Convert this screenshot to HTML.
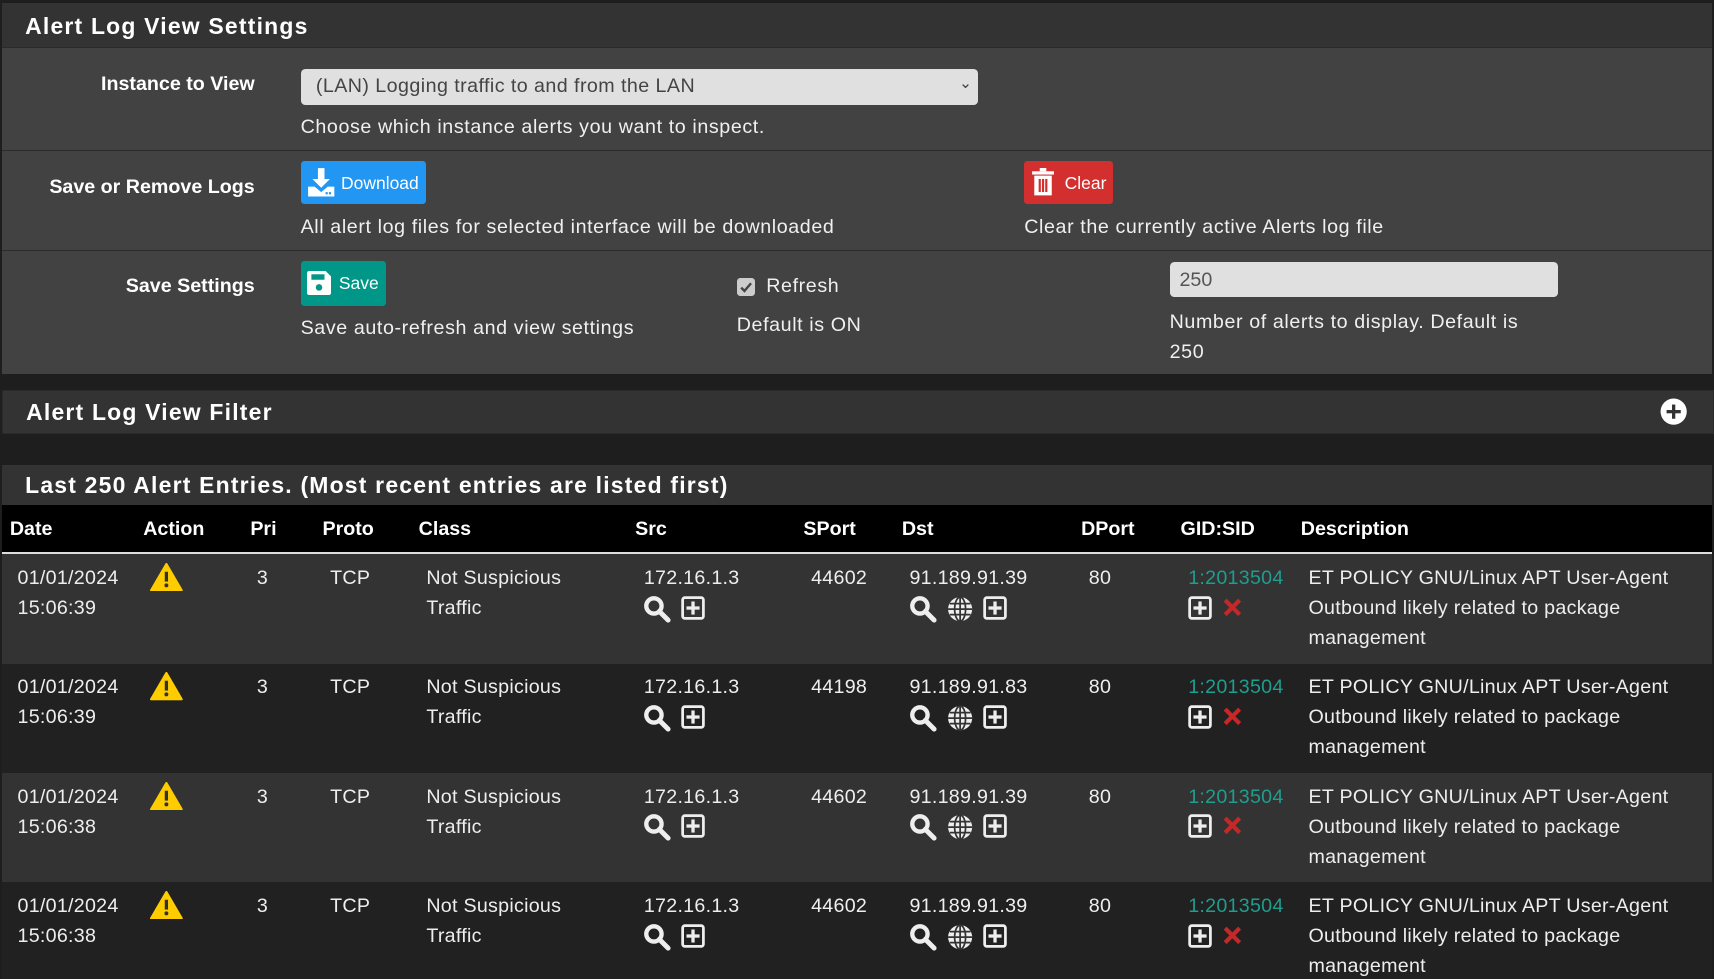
<!DOCTYPE html>
<html><head><meta charset="utf-8"><style>
html,body{margin:0;padding:0;background:#1e1e1e;width:1714px;height:979px;overflow:hidden}
#w{zoom:1.09311;width:1568px;height:896px;position:relative;font-family:"Liberation Sans",sans-serif;color:#fff}
.a{position:absolute;white-space:nowrap}
.pan{position:absolute;left:2px;width:1564px}
.hd{background:#333;border-bottom:1px solid #2a2a2a}
.ttl{position:absolute;left:21px;font-size:21px;font-weight:bold;letter-spacing:1.1px;color:#fff}
.lbl{position:absolute;font-size:18px;font-weight:bold;right:1335px;text-align:right}
.t{font-size:18px;color:#f0f0f0;letter-spacing:0.55px}
.btn{position:absolute;border-radius:3px;color:#fff;font-size:16px}
.th{position:absolute;top:474px;font-size:18px;font-weight:bold}
.row{position:absolute;left:2px;width:1564px;height:100px}
.c{position:absolute;font-size:18px;line-height:27.5px;color:#eee;letter-spacing:0.25px}
</style></head><body><div id="w">
<div class="pan hd" style="top:3px;height:40px"><div class="ttl" style="top:9px">Alert Log View Settings</div></div>
<div class="pan" style="top:44px;height:93px;background:#424242;border-bottom:1px solid #2b2b2b"></div>
<div class="pan" style="top:138px;height:91px;background:#424242;border-bottom:1px solid #2b2b2b"></div>
<div class="pan" style="top:230px;height:112px;background:#424242"></div>
<div class="a lbl" style="top:67px">Instance to View</div>
<div class="a" style="left:275px;top:63px;width:620px;height:33px;background:#e0e0e0;border-radius:4px"><span class="a" style="left:14px;top:6px;font-size:18px;color:#444;letter-spacing:0.4px">(LAN) Logging traffic to and from the LAN</span><span class="a" style="right:6px;top:5px;font-size:14px;color:#444">&#8964;</span></div>
<div class="a t" style="left:275px;top:106px">Choose which instance alerts you want to inspect.</div>
<div class="a lbl" style="top:161px">Save or Remove Logs</div>
<div class="btn" style="left:275px;top:147px;width:115px;height:40px;background:#2196f3">
<svg class="a" style="left:6px;top:6px" width="26" height="28" viewBox="0 0 26 28"><path d="M10 1h6v10h5l-8 8-8-8h5z" fill="#fff"/><path d="M1 18h6l6 5 6-5h6v9H1z" fill="#fff"/><rect x="17" y="23" width="2" height="2" fill="#2196f3"/><rect x="20" y="23" width="2" height="2" fill="#2196f3"/></svg>
<span class="a" style="left:37px;top:11px">Download</span></div>
<div class="a t" style="left:275px;top:198px">All alert log files for selected interface will be downloaded</div>
<div class="btn" style="left:937px;top:147px;width:81px;height:40px;background:#d32f2f">
<svg class="a" style="left:6px;top:7px" width="22" height="26" viewBox="0 0 22 26"><rect x="1" y="3" width="20" height="3" fill="#fff"/><rect x="8" y="0" width="6" height="3" fill="#fff"/><path d="M3 7h16v18H3z" fill="#fff"/><rect x="7" y="10" width="2" height="12" fill="#d32f2f"/><rect x="10" y="10" width="2" height="12" fill="#d32f2f"/><rect x="13" y="10" width="2" height="12" fill="#d32f2f"/></svg>
<span class="a" style="left:37px;top:11px">Clear</span></div>
<div class="a t" style="left:937px;top:198px">Clear the currently active Alerts log file</div>
<div class="a lbl" style="top:252px">Save Settings</div>
<div class="btn" style="left:275px;top:239px;width:78px;height:41px;background:#009688">
<svg class="a" style="left:6px;top:9px" width="22" height="22" viewBox="0 0 22 22"><path d="M0 2a2 2 0 012-2h15l5 5v15a2 2 0 01-2 2H2a2 2 0 01-2-2z" fill="#fff"/><rect x="4" y="3" width="12" height="5" fill="#009688"/><circle cx="11" cy="15" r="3" fill="#009688"/></svg>
<span class="a" style="left:35px;top:11px">Save</span></div>
<div class="a t" style="left:275px;top:290px">Save auto-refresh and view settings</div>
<div class="a" style="left:674px;top:254px;width:17px;height:17px;background:#ccc;border-radius:3px"><svg class="a" style="left:2px;top:2px" width="13" height="13" viewBox="0 0 13 13"><path d="M2 7l3 3 6-7" stroke="#444" stroke-width="2.2" fill="none"/></svg></div>
<div class="a t" style="left:701px;top:252px">Refresh</div>
<div class="a t" style="left:674px;top:287px">Default is ON</div>
<div class="a" style="left:1070px;top:240px;width:355px;height:32px;background:#e0e0e0;border-radius:4px"><span class="a" style="left:9px;top:6px;font-size:18px;color:#555">250</span></div>
<div class="a t" style="left:1070px;top:282px;line-height:27px;white-space:normal;width:340px">Number of alerts to display. Default is<br>250</div>
<div class="pan hd" style="top:357px;height:38px;border:1px solid #2a2a2a"><div class="ttl" style="top:7px">Alert Log View Filter</div>
<svg class="a" style="left:1516px;top:6px" width="25" height="25" viewBox="0 0 25 25"><circle cx="12.5" cy="12.5" r="12" fill="#fff"/><rect x="11" y="6" width="3" height="13" fill="#333"/><rect x="6" y="11" width="13" height="3" fill="#333"/></svg></div>
<div class="pan hd" style="top:425px;height:37px"><div class="ttl" style="top:7px">Last 250 Alert Entries. (Most recent entries are listed first)</div></div>
<div class="pan" style="top:462px;height:43px;background:#000;border-bottom:3px solid #ddd"></div>
<div class="th" style="left:9px">Date</div><div class="th" style="left:131px">Action</div><div class="th" style="left:229px">Pri</div><div class="th" style="left:295px">Proto</div><div class="th" style="left:383px">Class</div><div class="th" style="left:581px">Src</div><div class="th" style="left:735px">SPort</div><div class="th" style="left:825px">Dst</div><div class="th" style="left:989px">DPort</div><div class="th" style="left:1080px">GID:SID</div><div class="th" style="left:1190px">Description</div>
<svg width="0" height="0" style="position:absolute"><defs>
<symbol id="mag" viewBox="0 0 26 26"><circle cx="10" cy="10" r="7" stroke="#eee" stroke-width="4" fill="none"/><path d="M15 15l8 8" stroke="#eee" stroke-width="4.5" stroke-linecap="round"/></symbol>
<symbol id="plus" viewBox="0 0 22 22"><rect x="1.5" y="1.5" width="19" height="19" rx="2" stroke="#eee" stroke-width="2.5" fill="none"/><rect x="9.5" y="5" width="3" height="12" fill="#eee"/><rect x="5" y="9.5" width="12" height="3" fill="#eee"/></symbol>
<symbol id="glob" viewBox="0 0 24 24"><circle cx="12" cy="12" r="11" fill="#eee"/><path d="M1 12h22M2.5 7h19M2.5 17h19M12 1v22" stroke="#333" stroke-width="1.6"/><ellipse cx="12" cy="12" rx="5" ry="11" stroke="#333" stroke-width="1.6" fill="none"/></symbol>
<symbol id="warn" viewBox="0 0 30 26"><path d="M15 1L29 25H1z" fill="#ffcc00" stroke="#ffcc00" stroke-width="2" stroke-linejoin="round"/><rect x="13.5" y="8" width="3" height="9" fill="#333"/><circle cx="15" cy="20.5" r="1.8" fill="#333"/></symbol>
<symbol id="x" viewBox="0 0 20 20"><path d="M3 3l14 14M17 3L3 17" stroke="#c62828" stroke-width="4"/></symbol>
</defs></svg>
<div id="rows"></div>
</div>
<script>
var d=[["15:06:39","44602","91.189.91.39","#333"],["15:06:39","44198","91.189.91.83","#212121"],["15:06:38","44602","91.189.91.39","#333"],["15:06:38","44602","91.189.91.39","#212121"]];
var h="";
d.forEach(function(r,i){var y=507+i*100;
h+='<div class="row" style="top:'+y+'px;background:'+r[3]+'"></div>';
var ty=y+8;
function c(x,t,ex){h+='<div class="c" style="left:'+x+'px;top:'+ty+'px;'+(ex||'')+'">'+t+'</div>';}
c(16,'01/01/2024<br>'+r[0]);
h+='<svg class="a" style="left:137px;top:'+(y+8)+'px" width="30" height="26"><use href="#warn"/></svg>';
c(235,'3');c(302,'TCP');c(390,'Not Suspicious<br>Traffic');c(589,'172.16.1.3');c(742,r[1]);c(832,r[2]);c(996,'80');
c(1087,'1:2013504','color:#1e9e8e');
c(1197,'ET POLICY GNU/Linux APT User-Agent<br>Outbound likely related to package<br>management');
var iy=y+37;
h+='<svg class="a" style="left:588px;top:'+iy+'px" width="26" height="26"><use href="#mag"/></svg>';
h+='<svg class="a" style="left:623px;top:'+(iy+1)+'px" width="22" height="22"><use href="#plus"/></svg>';
h+='<svg class="a" style="left:832px;top:'+iy+'px" width="26" height="26"><use href="#mag"/></svg>';
h+='<svg class="a" style="left:866px;top:'+(iy+1)+'px" width="24" height="24"><use href="#glob"/></svg>';
h+='<svg class="a" style="left:899px;top:'+(iy+1)+'px" width="22" height="22"><use href="#plus"/></svg>';
h+='<svg class="a" style="left:1087px;top:'+(iy+1)+'px" width="22" height="22"><use href="#plus"/></svg>';
h+='<svg class="a" style="left:1118px;top:'+(iy+2)+'px" width="19" height="19"><use href="#x"/></svg>';
});
document.getElementById('rows').innerHTML=h;
</script>
</body></html>
